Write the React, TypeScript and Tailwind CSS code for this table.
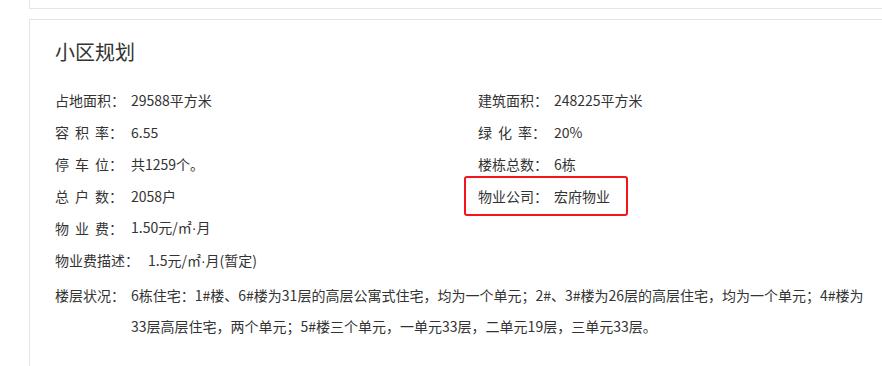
import React from "react";

type Item = { label: React.ReactNode; value: React.ReactNode; boxed?: boolean };

const spaced = (chars: string) => (
  <span className="tracking-[6px]">{chars.slice(0, -1)}<span className="tracking-normal">{chars.slice(-1)}</span></span>
);

// narrow middle dot, CJK fonts draw it full width
const Dot = () => <span className="font-['Liberation_Sans']">·</span>;

const left: Item[] = [
  { label: "占地面积：", value: "29588平方米" },
  { label: <>{spaced("容积率")}：</>, value: "6.55" },
  { label: <>{spaced("停车位")}：</>, value: "共1259个。" },
  { label: <>{spaced("总户数")}：</>, value: "2058户" },
];

const right: Item[] = [
  { label: "建筑面积：", value: "248225平方米" },
  { label: <>{spaced("绿化率")}：</>, value: "20%" },
  { label: "楼栋总数：", value: "6栋" },
  { label: "物业公司：", value: "宏府物业", boxed: true },
];

const Row = ({ item }: { item: Item }) => (
  <div className="relative flex h-[32px] items-center">
    <span className="w-[76px] shrink-0">{item.label}</span>
    <span>{item.value}</span>
    {item.boxed && (
      <div className="absolute left-[-14px] top-[-4px] h-[40px] w-[164px] rounded-[3px] border-2 border-[#f5141a]" />
    )}
  </div>
);

const App = () => {
  return (
    <div
      className="h-[366px] w-[882px] overflow-hidden bg-white text-[14px] text-[#333]"
      style={{ fontFamily: '"Noto Sans CJK SC", "Noto Sans", sans-serif' }}
    >
      <div className="ml-[29px] h-[9px] w-[900px] border-x border-b border-[#e5e5e5]" />
      <div className="ml-[29px] mt-[10px] h-[400px] w-[900px] border border-[#e5e5e5] pl-[25px] pt-[18px]">
        <h2 className="text-[20px] leading-[28px]">小区规划</h2>
        <div className="mt-[18px] grid grid-cols-[423px_1fr]">
          <div>
            {left.map((item, i) => (
              <Row key={i} item={item} />
            ))}
          </div>
          <div>
            {right.map((item, i) => (
              <Row key={i} item={item} />
            ))}
          </div>
        </div>
        <Row item={{ label: <>{spaced("物业费")}：</>, value: <>1.50元/㎡<Dot />月</> }} />
        <div className="flex h-[33px] items-center">
          <span>物业费描述：</span>
          <span className="ml-[9px]">1.5元/㎡<Dot />月(暂定)</span>
        </div>
        <div className="mt-[3px] flex leading-[31px]">
          <span className="w-[76px] shrink-0">楼层状况：</span>
          <p className="w-[745px]">
            6栋住宅：1#楼、6#楼为31层的高层公寓式住宅，均为一个单元；2#、3#楼为26层的高层住宅，均为一个单元；4#楼为33层高层住宅，两个单元；5#楼三个单元，一单元33层，二单元19层，三单元33层。
          </p>
        </div>
      </div>
    </div>
  );
};

export default App;
